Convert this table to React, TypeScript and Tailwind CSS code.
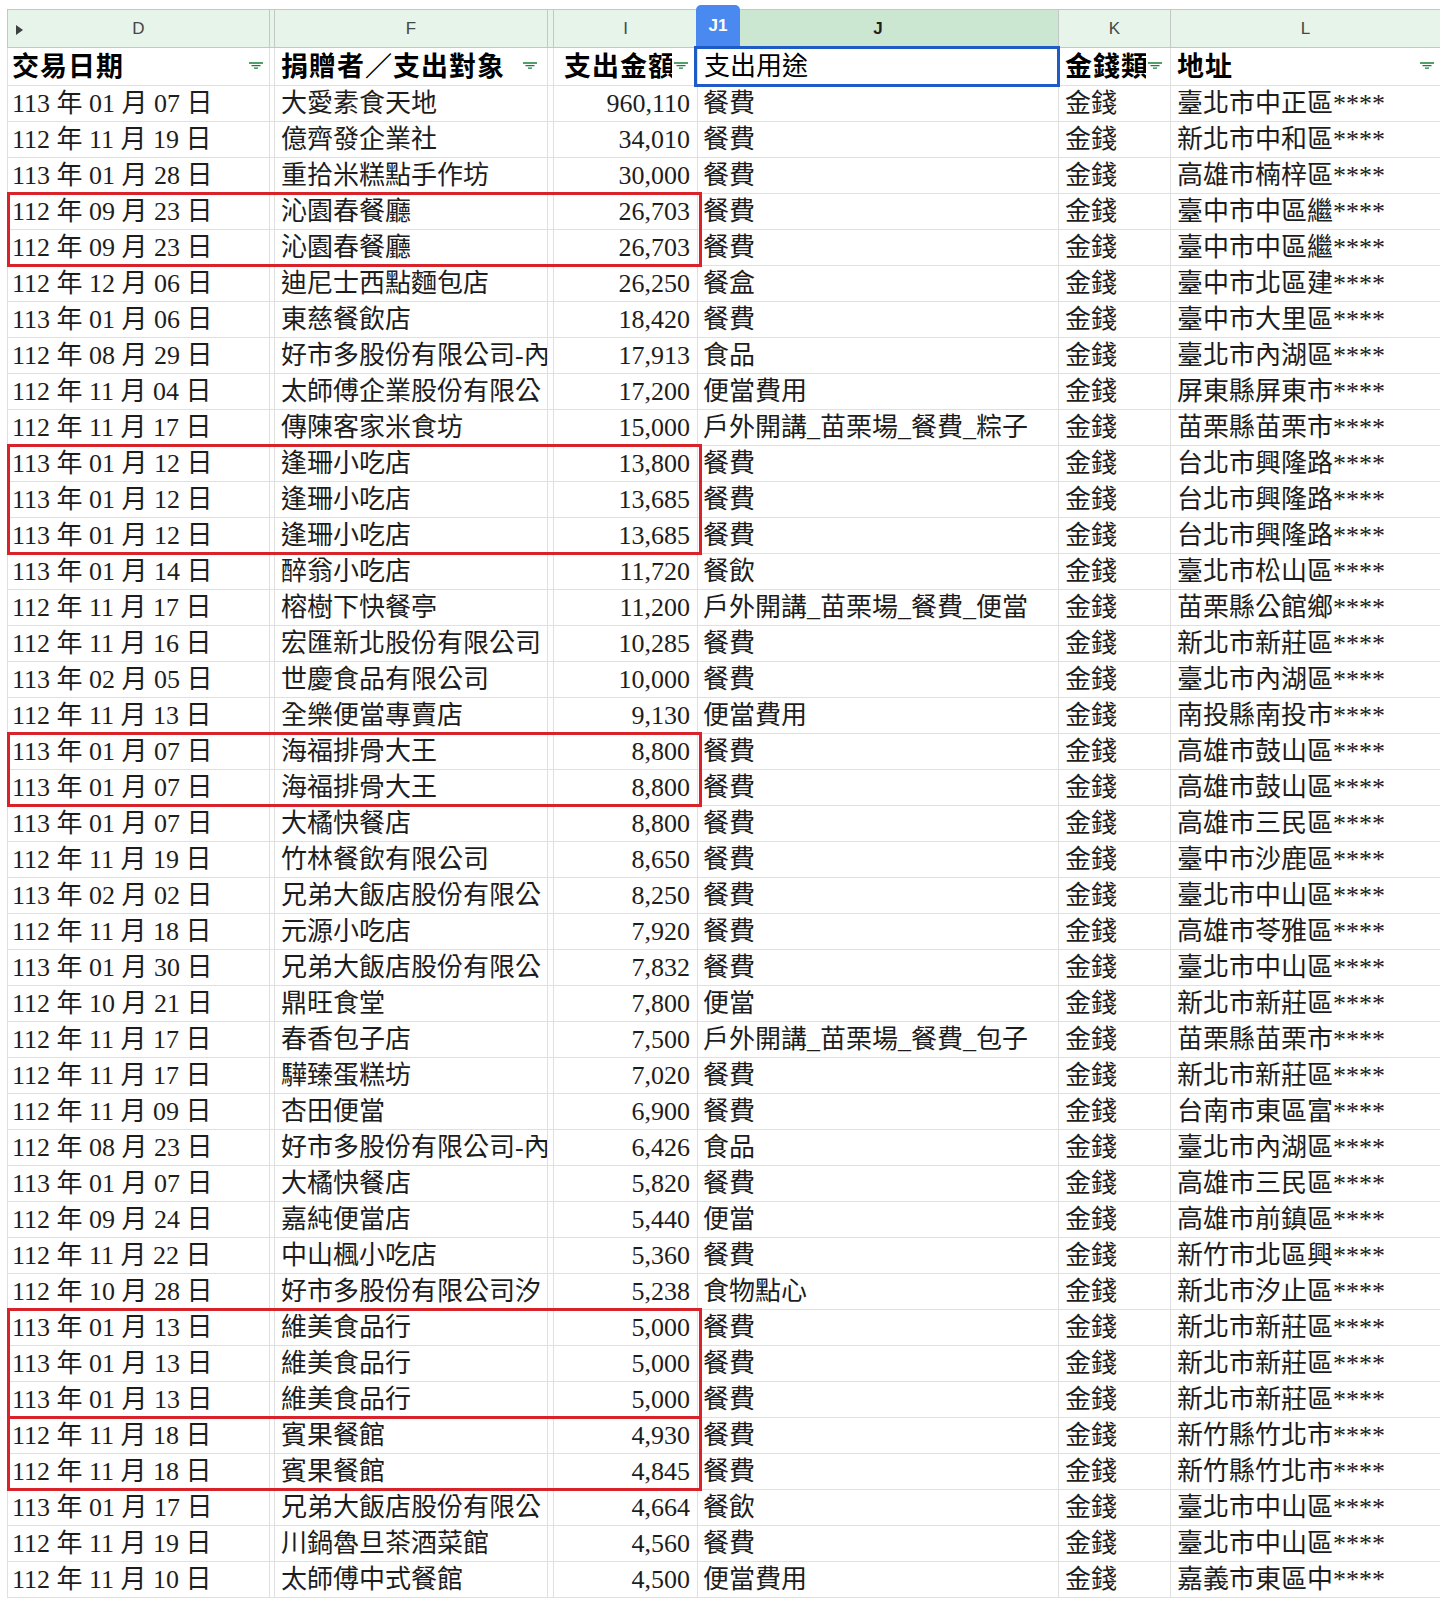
import React from "react";

type Row = [string, string, string, string, string];

const rows: Row[] = [
  ["113 年 01 月 07 日", "大愛素食天地", "960,110", "餐費", "臺北市中正區****"],
  ["112 年 11 月 19 日", "億齊發企業社", "34,010", "餐費", "新北市中和區****"],
  ["113 年 01 月 28 日", "重拾米糕點手作坊", "30,000", "餐費", "高雄市楠梓區****"],
  ["112 年 09 月 23 日", "沁園春餐廳", "26,703", "餐費", "臺中市中區繼****"],
  ["112 年 09 月 23 日", "沁園春餐廳", "26,703", "餐費", "臺中市中區繼****"],
  ["112 年 12 月 06 日", "迪尼士西點麵包店", "26,250", "餐盒", "臺中市北區建****"],
  ["113 年 01 月 06 日", "東慈餐飲店", "18,420", "餐費", "臺中市大里區****"],
  ["112 年 08 月 29 日", "好市多股份有限公司-內", "17,913", "食品", "臺北市內湖區****"],
  ["112 年 11 月 04 日", "太師傅企業股份有限公", "17,200", "便當費用", "屏東縣屏東市****"],
  ["112 年 11 月 17 日", "傳陳客家米食坊", "15,000", "戶外開講_苗栗場_餐費_粽子", "苗栗縣苗栗市****"],
  ["113 年 01 月 12 日", "逢珊小吃店", "13,800", "餐費", "台北市興隆路****"],
  ["113 年 01 月 12 日", "逢珊小吃店", "13,685", "餐費", "台北市興隆路****"],
  ["113 年 01 月 12 日", "逢珊小吃店", "13,685", "餐費", "台北市興隆路****"],
  ["113 年 01 月 14 日", "醉翁小吃店", "11,720", "餐飲", "臺北市松山區****"],
  ["112 年 11 月 17 日", "榕樹下快餐亭", "11,200", "戶外開講_苗栗場_餐費_便當", "苗栗縣公館鄉****"],
  ["112 年 11 月 16 日", "宏匯新北股份有限公司", "10,285", "餐費", "新北市新莊區****"],
  ["113 年 02 月 05 日", "世慶食品有限公司", "10,000", "餐費", "臺北市內湖區****"],
  ["112 年 11 月 13 日", "全樂便當專賣店", "9,130", "便當費用", "南投縣南投市****"],
  ["113 年 01 月 07 日", "海福排骨大王", "8,800", "餐費", "高雄市鼓山區****"],
  ["113 年 01 月 07 日", "海福排骨大王", "8,800", "餐費", "高雄市鼓山區****"],
  ["113 年 01 月 07 日", "大橘快餐店", "8,800", "餐費", "高雄市三民區****"],
  ["112 年 11 月 19 日", "竹林餐飲有限公司", "8,650", "餐費", "臺中市沙鹿區****"],
  ["113 年 02 月 02 日", "兄弟大飯店股份有限公", "8,250", "餐費", "臺北市中山區****"],
  ["112 年 11 月 18 日", "元源小吃店", "7,920", "餐費", "高雄市苓雅區****"],
  ["113 年 01 月 30 日", "兄弟大飯店股份有限公", "7,832", "餐費", "臺北市中山區****"],
  ["112 年 10 月 21 日", "鼎旺食堂", "7,800", "便當", "新北市新莊區****"],
  ["112 年 11 月 17 日", "春香包子店", "7,500", "戶外開講_苗栗場_餐費_包子", "苗栗縣苗栗市****"],
  ["112 年 11 月 17 日", "驊臻蛋糕坊", "7,020", "餐費", "新北市新莊區****"],
  ["112 年 11 月 09 日", "杏田便當", "6,900", "餐費", "台南市東區富****"],
  ["112 年 08 月 23 日", "好市多股份有限公司-內", "6,426", "食品", "臺北市內湖區****"],
  ["113 年 01 月 07 日", "大橘快餐店", "5,820", "餐費", "高雄市三民區****"],
  ["112 年 09 月 24 日", "嘉純便當店", "5,440", "便當", "高雄市前鎮區****"],
  ["112 年 11 月 22 日", "中山楓小吃店", "5,360", "餐費", "新竹市北區興****"],
  ["112 年 10 月 28 日", "好市多股份有限公司汐", "5,238", "食物點心", "新北市汐止區****"],
  ["113 年 01 月 13 日", "維美食品行", "5,000", "餐費", "新北市新莊區****"],
  ["113 年 01 月 13 日", "維美食品行", "5,000", "餐費", "新北市新莊區****"],
  ["113 年 01 月 13 日", "維美食品行", "5,000", "餐費", "新北市新莊區****"],
  ["112 年 11 月 18 日", "賓果餐館", "4,930", "餐費", "新竹縣竹北市****"],
  ["112 年 11 月 18 日", "賓果餐館", "4,845", "餐費", "新竹縣竹北市****"],
  ["113 年 01 月 17 日", "兄弟大飯店股份有限公", "4,664", "餐飲", "臺北市中山區****"],
  ["112 年 11 月 19 日", "川鍋魯旦茶酒菜館", "4,560", "餐費", "臺北市中山區****"],
  ["112 年 11 月 10 日", "太師傅中式餐館", "4,500", "便當費用", "嘉義市東區中****"],
];

// red boxes drawn over duplicate groups: [first row index, row count]
const marks: [number, number][] = [
  [3, 2],
  [10, 3],
  [18, 2],
  [34, 3],
  [37, 2],
];

const cell = "flex shrink-0 items-center overflow-hidden whitespace-nowrap border-r border-[#e0e0e0]";

function FilterIcon() {
  return (
    <svg width="14" height="8" viewBox="0 0 14 8" className="mb-[2px] shrink-0">
      <path d="M0 1h14M2.5 3.6h9M5 6.2h4" stroke="#188038" strokeWidth="1.3" fill="none" />
    </svg>
  );
}

function HeadCell({
  label,
  w,
  pr = "pr-[8px]",
  pl = "pl-[4px]",
  bold = true,
}: {
  label: string;
  w: string;
  pr?: string;
  pl?: string;
  bold?: boolean;
}) {
  return (
    <div className={`${cell} ${w} ${pl} ${pr} gap-[2px]`}>
      <span
        className={`min-w-0 flex-1 overflow-hidden leading-[36px] ${
          bold ? "text-[27px] font-bold tracking-[1px]" : "text-[26px]"
        }`}
      >
        {label}
      </span>
      {bold && <FilterIcon />}
    </div>
  );
}

export default function App() {
  return (
    <div
      className="relative min-h-[1603px] w-[1440px] overflow-hidden bg-white pt-[9px] text-[#1d1d1d]"
      style={{ fontFamily: '"Liberation Serif", "Noto Sans CJK TC", serif' }}
    >
      {/* column letters */}
      <div
        className="ml-[7px] flex h-[39px] border-y border-l border-[#c4c7c5] text-[17px] text-[#444746]"
        style={{ fontFamily: '"Liberation Sans", Arial, sans-serif' }}
      >
        <div className="relative flex w-[262px] shrink-0 items-center justify-center border-r border-[#c4c7c5] bg-[#e6f4ea]">
          <svg width="7" height="10" viewBox="0 0 7 10" className="absolute left-[8px] top-[15px]">
            <path d="M0 0l7 5-7 5z" fill="#3c4043" />
          </svg>
          D
        </div>
        <div className="w-[5px] shrink-0 border-r border-[#c4c7c5] bg-[#e6f4ea]" />
        <div className="flex w-[273px] shrink-0 items-center justify-center border-r border-[#c4c7c5] bg-[#e6f4ea]">F</div>
        <div className="w-[6px] shrink-0 border-r border-[#c4c7c5] bg-[#e6f4ea]" />
        <div className="flex w-[144px] shrink-0 items-center justify-center border-r border-[#c4c7c5] bg-[#e6f4ea]">I</div>
        <div className="flex w-[361px] shrink-0 items-center justify-center border-r border-[#c4c7c5] bg-[#cbe7d2] font-bold text-[#1f1f1f]">
          J
        </div>
        <div className="flex w-[112px] shrink-0 items-center justify-center border-r border-[#c4c7c5] bg-[#e6f4ea]">K</div>
        <div className="flex flex-1 items-center justify-center bg-[#e6f4ea]">L</div>
      </div>

      {/* header row */}
      <div className="ml-[7px] flex h-[38px] border-b border-l border-[#e0e0e0] text-black">
        <HeadCell label="交易日期" w="w-[262px]" pr="pr-[6px]" />
        <div className="w-[5px] shrink-0 border-r border-[#e0e0e0]" />
        <HeadCell label="捐贈者／支出對象" w="w-[273px]" pl="pl-[6px]" pr="pr-[10px]" />
        <div className="w-[6px] shrink-0 border-r border-[#e0e0e0]" />
        <HeadCell label="支出金額" w="w-[144px]" pl="pl-[10px]" pr="pr-[9px]" />
        <HeadCell label="支出用途" w="w-[361px]" pl="pl-[6px]" bold={false} />
        <HeadCell label="金錢類" w="w-[112px]" pl="pl-[6px]" />
        <div className="flex flex-1 items-center gap-[2px] overflow-hidden whitespace-nowrap pl-[6px] pr-[6px]">
          <span className="min-w-0 flex-1 overflow-hidden text-[27px] font-bold leading-[36px] tracking-[1px]">地址</span>
          <FilterIcon />
        </div>
      </div>

      {/* data */}
      {rows.map((r, i) => (
        <div key={i} className="ml-[7px] flex h-[36px] border-b border-l border-[#e0e0e0] text-[26px] leading-none">
          <div className={`${cell} w-[262px] pl-[4px]`}>{r[0]}</div>
          <div className="w-[5px] shrink-0 border-r border-[#e0e0e0]" />
          <div className={`${cell} w-[273px] pl-[6px]`}>{r[1]}</div>
          <div className="w-[6px] shrink-0 border-r border-[#e0e0e0]" />
          <div className={`${cell} w-[144px] justify-end pr-[7px]`}>{r[2]}</div>
          <div className={`${cell} w-[361px] pl-[5px]`}>{r[3]}</div>
          <div className={`${cell} w-[112px] pl-[6px]`}>金錢</div>
          <div className="flex flex-1 items-center overflow-hidden whitespace-nowrap pl-[6px]">{r[4]}</div>
        </div>
      ))}

      {/* selected cell J1 */}
      <div className="absolute left-[694px] top-[46px] h-[41px] w-[366px] border-[3px] border-[#1f5bc6]" />
      <div
        className="absolute left-[696px] top-[5px] flex h-[41px] w-[44px] items-center justify-center rounded-t-[5px] bg-[#4a89f0] text-[17px] font-bold text-white"
        style={{ fontFamily: '"Liberation Sans", Arial, sans-serif' }}
      >
        J1
      </div>

      {marks.map(([start, n]) => (
        <div
          key={start}
          className="absolute left-[7px] w-[695px] border-[3px] border-[#d8232a]"
          style={{ top: 84 + 36 * start, height: 36 * n + 3 }}
        />
      ))}
    </div>
  );
}
